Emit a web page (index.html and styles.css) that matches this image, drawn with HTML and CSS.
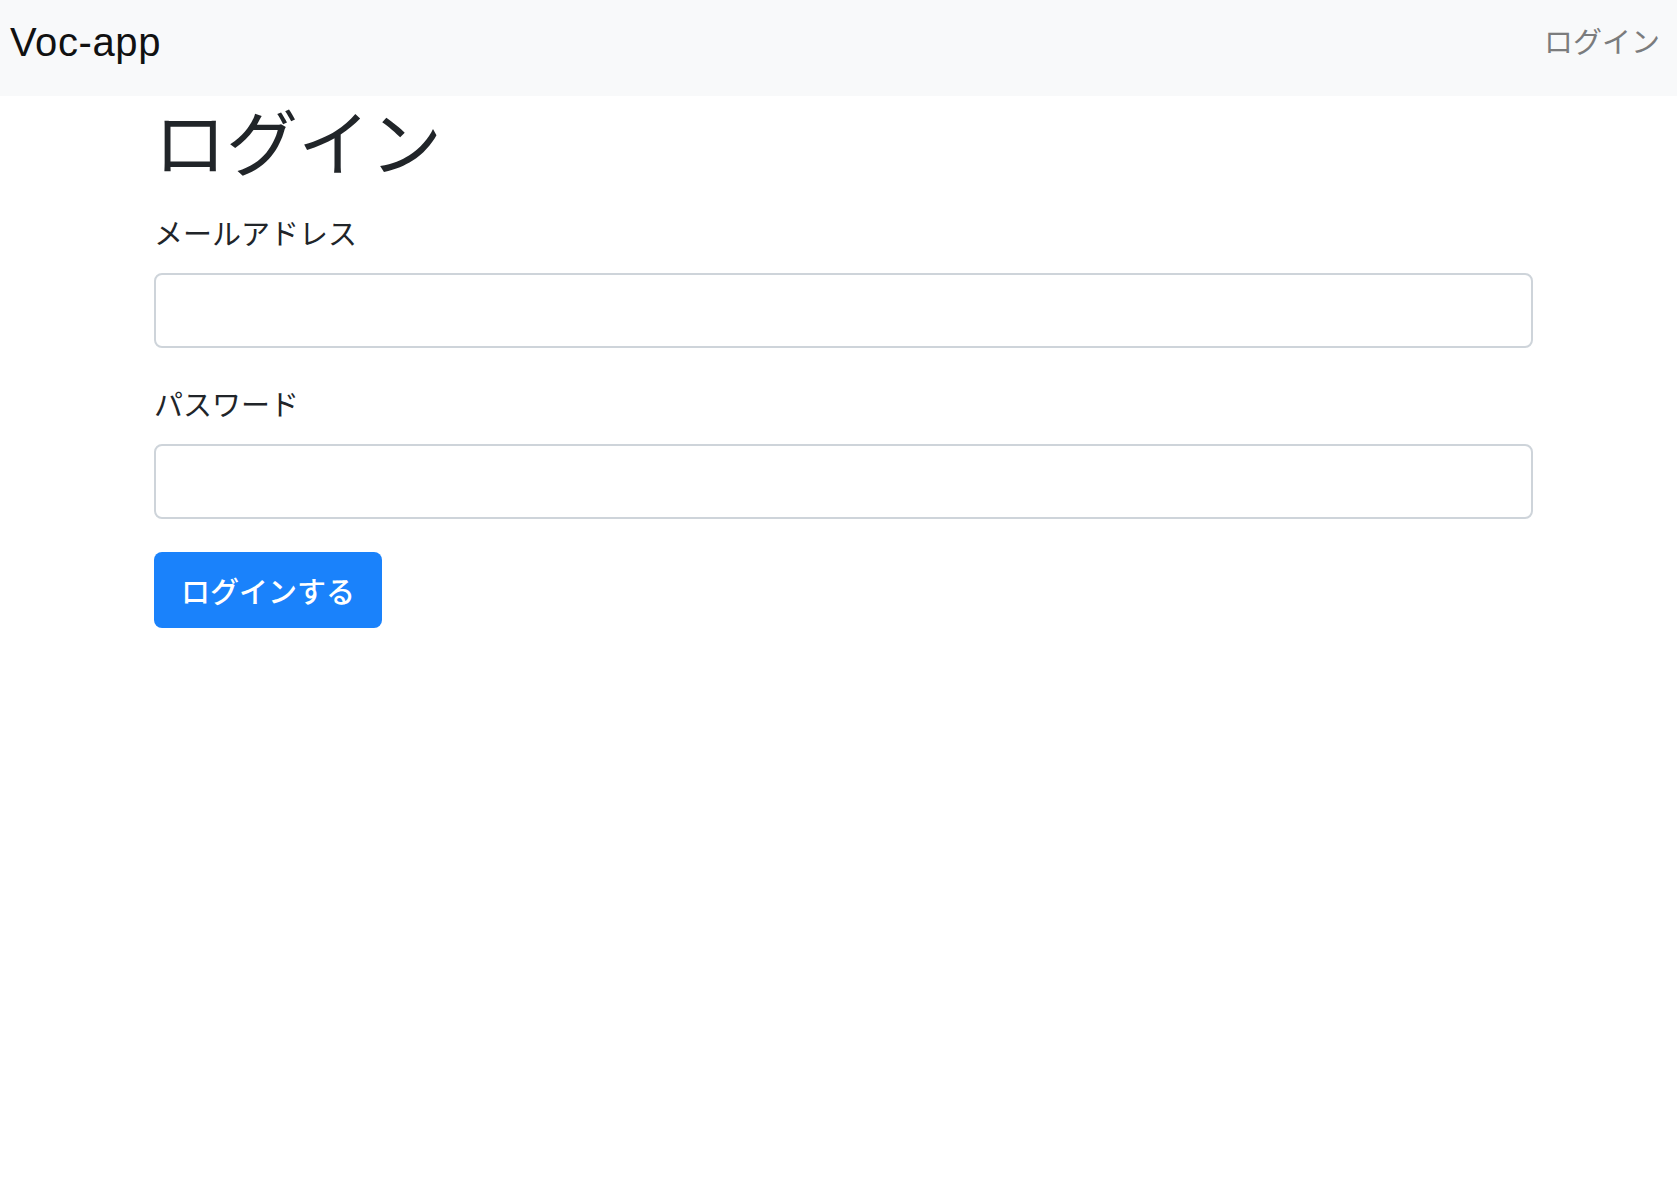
FILE: index.html
```html
<!DOCTYPE html>
<html lang="ja">
<head>
<meta charset="utf-8">
<title>Voc-app</title>
<link rel="stylesheet" href="styles.css">
</head>
<body>
<nav class="navbar">
  <a class="brand" href="#">Voc-app</a>
  <a class="nav-link" href="#">ログイン</a>
</nav>
<main class="container">
  <h1 class="title">ログイン</h1>
  <form class="login-form">
    <div class="form-group">
      <label class="form-label" for="email">メールアドレス</label>
      <input class="form-control" id="email" type="email">
    </div>
    <div class="form-group">
      <label class="form-label" for="password">パスワード</label>
      <input class="form-control" id="password" type="password">
    </div>
    <button class="btn-primary" type="button">ログインする</button>
  </form>
</main>
</body>
</html>
```

FILE: styles.css
```css
html, body {
  margin: 0;
  padding: 0;
  background: #ffffff;
}
body {
  font-family: "Liberation Sans", "Noto Sans CJK JP", sans-serif;
  color: #212529;
  font-size: 29px;
}
.navbar {
  display: flex;
  justify-content: space-between;
  align-items: flex-start;
  box-sizing: border-box;
  height: 96px;
  padding: 12.5px 17px 0 10px;
  background: #f8f9fa;
}
.brand {
  font-size: 40px;
  letter-spacing: 0.6px;
  line-height: 58px;
  color: #111111;
  text-decoration: none;
}
.nav-link {
  margin-top: 1px;
  font-size: 29px;
  line-height: 58px;
  color: #7b7c7d;
  text-decoration: none;
}
.container {
  width: 1379px;
  margin-left: 154px;
}
.title {
  font-family: "Noto Sans CJK JP", sans-serif;
  font-size: 72px;
  font-weight: 400;
  line-height: 86px;
  margin: 0 0 27.5px 0;
  color: #212529;
}
.form-group {
  margin-bottom: 33px;
}
.form-label {
  display: block;
  font-family: "Noto Sans CJK JP", sans-serif;
  font-size: 29px;
  line-height: 44px;
  margin-bottom: 19px;
}
.form-control {
  display: block;
  width: 100%;
  height: 75px;
  box-sizing: border-box;
  border: 2px solid #ced4da;
  border-radius: 8px;
  background: #ffffff;
  padding: 0 20px;
  font-size: 29px;
}
.btn-primary {
  display: block;
  width: 228px;
  height: 76px;
  border: none;
  border-radius: 8px;
  background: #1a82fb;
  color: #ffffff;
  font-family: "Noto Sans CJK JP", sans-serif;
  font-size: 29px;
  font-weight: 500;
  padding: 0;
  cursor: pointer;
}
```
